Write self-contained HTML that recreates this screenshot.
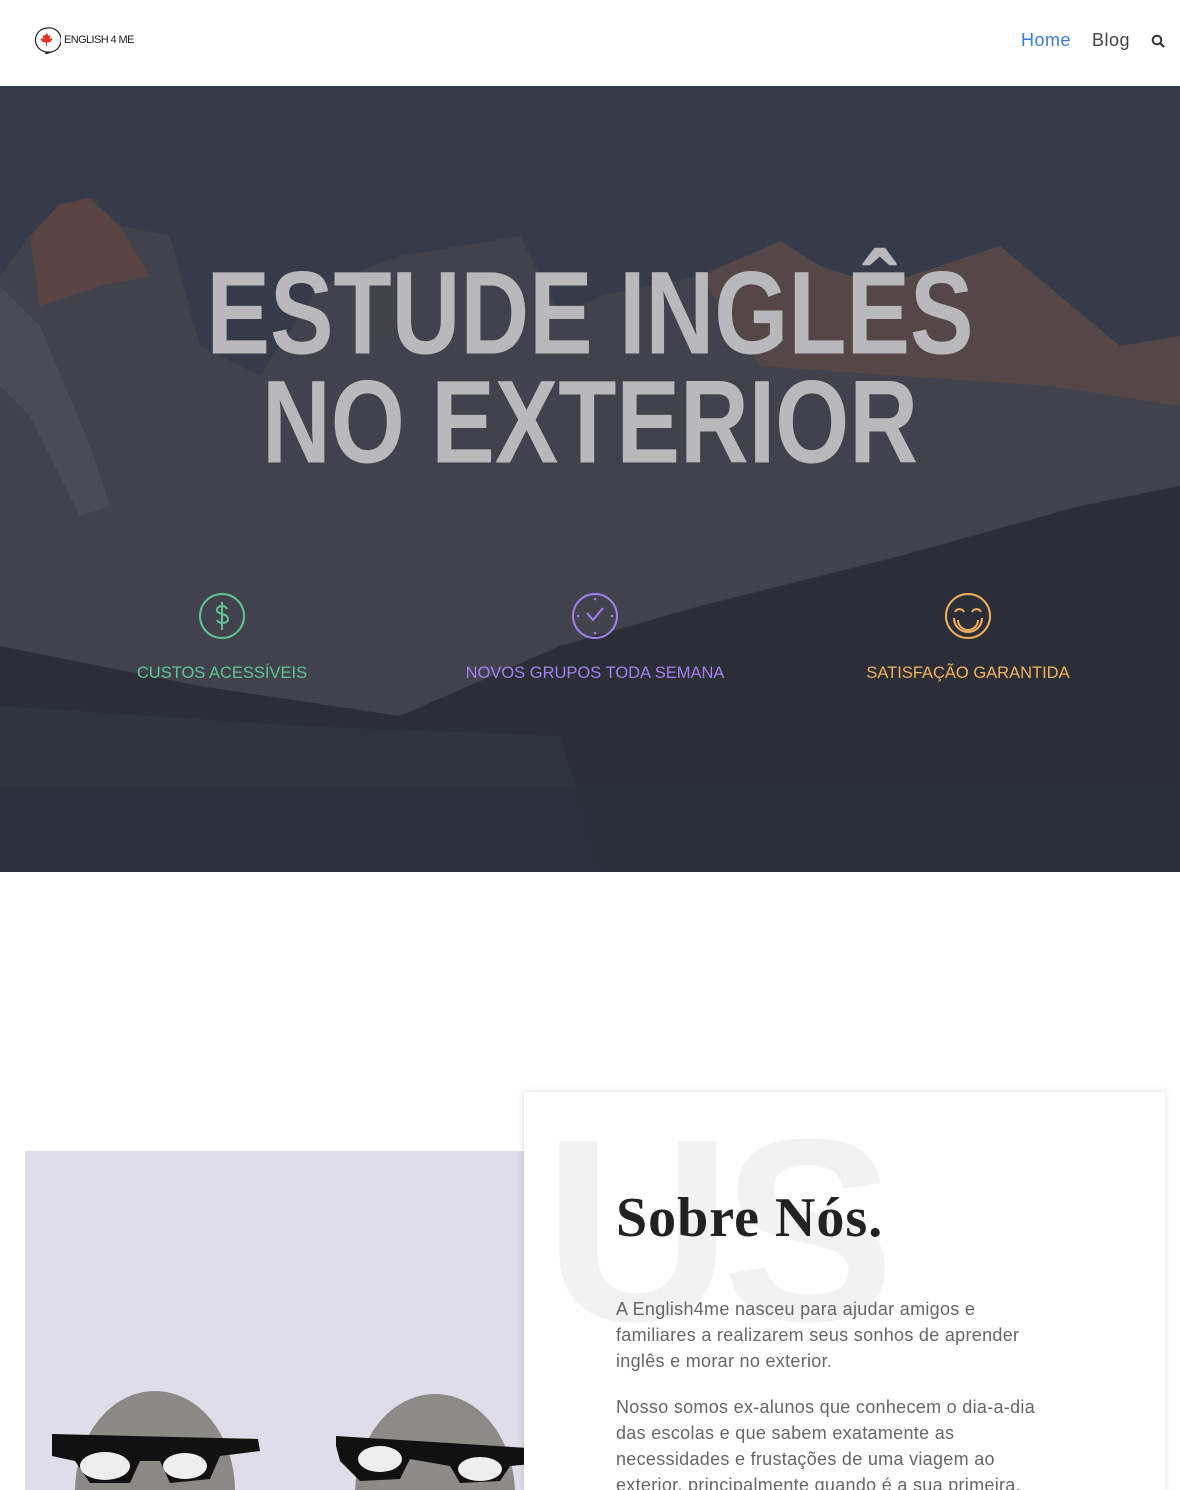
<!DOCTYPE html>
<html><head><meta charset="utf-8"><style>
*{margin:0;padding:0;box-sizing:border-box}
html,body{width:1180px;height:1490px;overflow:hidden}
body{background:#fff;font-family:"Liberation Sans",sans-serif;position:relative}
.hdr{position:absolute;top:0;left:0;width:1180px;height:86px;background:#fff}
.logo{position:absolute;left:33px;top:26px;display:flex;align-items:center}
.logo span{font-size:11px;color:#222;margin-left:3px;letter-spacing:-0.6px}
.nav{position:absolute;top:30px;right:0;font-size:18px;display:flex}
.nav a{text-decoration:none;margin-right:21px;letter-spacing:0.5px}
.hero{position:absolute;top:86px;left:0;width:1180px;height:786px;overflow:hidden;background:#373b49}
.m{position:absolute;left:0;top:0}
.title{position:absolute;top:178px;left:0;width:1180px;text-align:center;color:#b9b9bc;font-weight:bold;font-size:112px;line-height:104px;transform:scale(0.85,1.05)}
.feat{position:absolute;top:506px;width:400px;text-align:center;font-size:16.5px}
.feat svg{display:block;margin:0 auto 24px}
.card{position:absolute;left:524px;top:1092px;width:641px;height:398px;background:#fff;box-shadow:0 0 6px rgba(0,0,0,.15);overflow:hidden}
.us{position:absolute;left:20px;top:-10px;font-size:260px;font-weight:bold;color:#f2f2f3;letter-spacing:-10px}
.card h2{position:absolute;left:92px;top:94px;font-family:"Liberation Serif",serif;font-size:56px;color:#222;font-weight:bold;letter-spacing:1px}
.card p{position:absolute;left:92px;width:500px;font-size:18px;line-height:26px;color:#666;white-space:nowrap;letter-spacing:0.3px}
</style></head><body>
<div class="hdr">
 <div class="logo"><svg width="28" height="28" viewBox="0 0 28 28"><path d="M14 2a12 12 0 1 0 1 24l-3 2 6-2A12 12 0 0 0 14 2z" fill="#fff" stroke="#222" stroke-width="1.2"/><path d="M14 7l1.5 3 2-1-1 4 2-1 1 2-2 1 .5 1-4 .5V20h-1v-3.5l-4-.5.5-1-2-1 1-2 2 1-1-4 2 1z" fill="#d32"/></svg><span>ENGLISH 4 ME</span></div>
 <div class="nav"><a style="color:#3a7bd5">Home</a><a style="color:#444">Blog</a><svg style="margin:4px 15px 0 0" width="14" height="14" viewBox="0 0 14 14"><circle cx="6" cy="6" r="4.3" fill="none" stroke="#333" stroke-width="2"/><path d="M9 9l4 4" stroke="#333" stroke-width="2.2"/></svg></div>
</div>
<div class="hero">
 <svg class="m" width="1180" height="786" viewBox="0 0 1180 786">
  <path d="M0 190 L30 150 60 118 90 112 120 140 170 150 200 260 260 290 320 200 400 170 460 160 520 150 560 230 600 210 700 190 780 155 820 180 880 200 1000 160 1060 210 1120 260 1180 250 V786 H0Z" fill="#41424c"/>
  <path d="M30 150 60 118 90 112 120 140 150 190 100 200 40 220Z" fill="#5e4641" opacity=".8"/>
  <path d="M700 190 780 155 820 180 880 200 1000 160 1060 210 1120 260 1180 250 V320 L1050 300 900 290 760 280Z" fill="#624a44" opacity=".6"/>
  <path d="M0 200 L40 240 90 360 110 420 80 430 30 330 0 300Z" fill="#525660" opacity=".5"/>
  <path d="M0 560 L200 600 400 630 560 560 700 520 900 470 1080 420 1180 400 V786 H0Z" fill="#2b2f35"/>
  <path d="M0 620 L300 640 560 650 600 786 H0Z" fill="#30353f" opacity=".8"/>
  <rect y="700" width="1180" height="86" fill="#2b313c" opacity=".7"/>
 </svg>
 <div class="title">ESTUDE INGLÊS<br>NO EXTERIOR</div>
 <div class="feat" style="left:22px;color:#5fc496"><svg width="48" height="48" viewBox="0 0 48 48"><circle cx="24" cy="24" r="22" fill="none" stroke="#5fc496" stroke-width="2"/><path d="M29 17c-1-2-3-3-5-3-3 0-5 2-5 4 0 5 11 3 11 9 0 3-3 4-6 4-2 0-4-1-5-3M24 10v28" fill="none" stroke="#5fc496" stroke-width="2"/></svg>CUSTOS ACESSÍVEIS</div>
 <div class="feat" style="left:395px;color:#a47ef0"><svg width="48" height="48" viewBox="0 0 48 48"><circle cx="24" cy="24" r="22" fill="none" stroke="#a47ef0" stroke-width="2"/><path d="M16 21l6 7 10-12" fill="none" stroke="#a47ef0" stroke-width="2"/><circle cx="24" cy="7" r="1.3" fill="#a47ef0"/><circle cx="24" cy="41" r="1.3" fill="#a47ef0"/><circle cx="7" cy="24" r="1.3" fill="#a47ef0"/><circle cx="41" cy="24" r="1.3" fill="#a47ef0"/></svg>NOVOS GRUPOS TODA SEMANA</div>
 <div class="feat" style="left:768px;color:#f0b060"><svg width="48" height="48" viewBox="0 0 48 48"><circle cx="24" cy="24" r="22" fill="none" stroke="#f0b060" stroke-width="2"/><path d="M11 20a5 5 0 0 1 9 0M28 20a5 5 0 0 1 9 0M10 26a14 14 0 0 0 28 0M14 28a10 10 0 0 0 20 0" fill="none" stroke="#f0b060" stroke-width="2"/></svg>SATISFAÇÃO GARANTIDA</div>
</div>
<div style="position:absolute;left:25px;top:1151px;width:499px;height:339px;background:#dfdde9;overflow:hidden">
 <div style="position:absolute;left:50px;top:240px;width:160px;height:200px;border-radius:50%;background:#8b8985"></div>
 <div style="position:absolute;left:330px;top:243px;width:160px;height:200px;border-radius:50%;background:#8d8b87"></div>
 <svg style="position:absolute;left:25px;top:280px" width="480" height="60" viewBox="0 0 480 60"><path d="M2 3 L208 8 L210 20 L170 25 L160 48 L120 52 L110 30 L90 30 L80 52 L40 52 L25 30 L2 25Z" fill="#111"/><ellipse cx="55" cy="35" rx="25" ry="14" fill="#eee"/><ellipse cx="135" cy="35" rx="22" ry="13" fill="#eee"/><path d="M286 5 L495 18 L492 32 L460 35 L450 50 L410 52 L400 35 L360 28 L350 48 L310 50 L290 30 L286 15Z" fill="#111"/><ellipse cx="330" cy="28" rx="22" ry="13" fill="#eee"/><ellipse cx="430" cy="38" rx="22" ry="12" fill="#eee"/></svg>
</div>
<div class="card">
 <div class="us">US</div>
 <h2>Sobre Nós.</h2>
 <p style="top:204px">A English4me nasceu para ajudar amigos e<br>familiares a realizarem seus sonhos de aprender<br>inglês e morar no exterior.</p>
 <p style="top:302px">Nosso somos ex-alunos que conhecem o dia-a-dia<br>das escolas e que sabem exatamente as<br>necessidades e frustações de uma viagem ao<br>exterior, principalmente quando é a sua primeira.</p>
</div>
</body></html>
